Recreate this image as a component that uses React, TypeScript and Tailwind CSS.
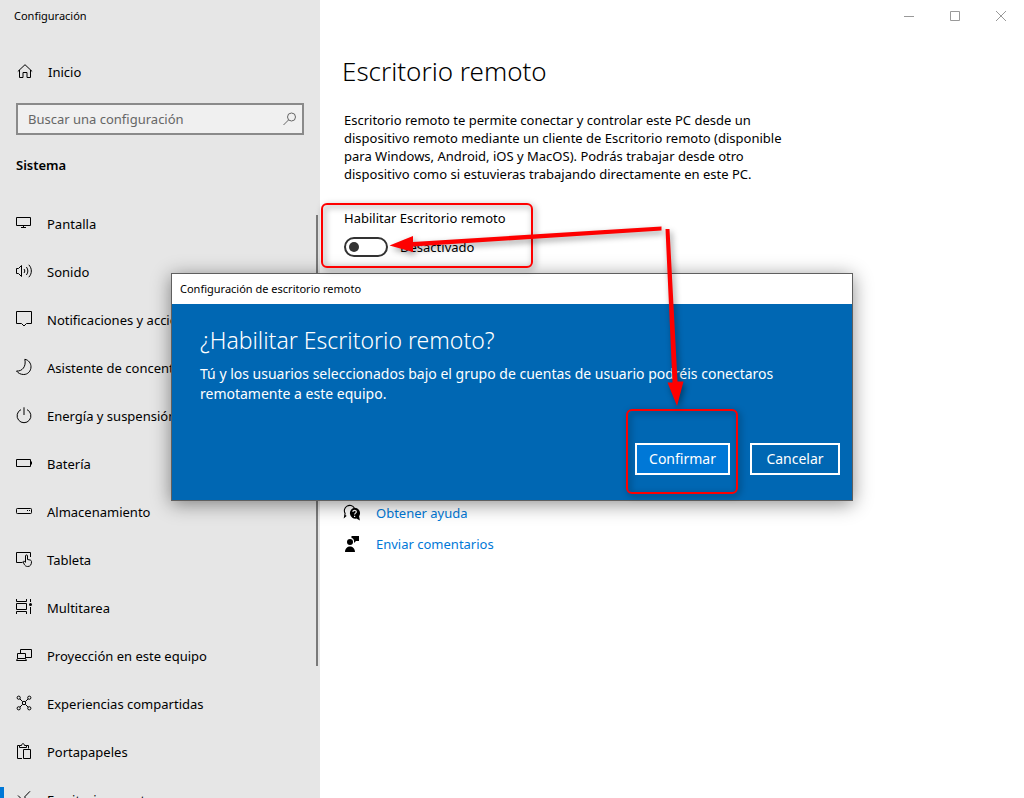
import { useState } from "react";
import type { ReactNode } from "react";

function Icon({ children }: { children: ReactNode }) {
  return (
    <svg
      className="size-4 shrink-0 overflow-visible"
      viewBox="0 0 16 16"
      fill="none"
      stroke="currentColor"
      strokeWidth="1"
      aria-hidden="true"
    >
      {children}
    </svg>
  );
}

const navItems: { label: string; icon: ReactNode; active?: boolean }[] = [
  {
    label: "Pantalla",
    icon: <path d="M.5 2.500h14v8H.5zM7.500 10.500v2M5 12.500h5" />,
  },
  {
    label: "Sonido",
    icon: (
      <>
        <path d="M.5 5.500h2l3-3v11l-3-3h-2z" />
        <path d="M8 6c1 1.200 1 2.800 0 4M10.300 4c2 2.400 2 5.600 0 8M12.800 1.800c3.400 3.600 3.400 8.800 0 12.400" />
      </>
    ),
  },
  {
    label: "Notificaciones y acciones",
    icon: <path d="M.5.5h15v12h-5L8 15l-2.500-2.500h-5z" />,
  },
  {
    label: "Asistente de concentración",
    icon: (
      <path d="M8.800.3c3.800.6 6.200 4 6.200 7.500 0 4.300-3.200 7.700-7.300 7.700-3 0-5.600-1.300-7.200-3.500 5.600.6 10-4.500 8.300-11.700z" />
    ),
  },
  {
    label: "Energía y suspensión",
    icon: <path d="M5 2.600a6.900 6.900 0 1 0 6 0M8 .3v7.700" />,
  },
  {
    label: "Batería",
    icon: <path d="M.5 4.500h14v7H.5zM15.500 6.500v3" />,
  },
  {
    label: "Almacenamiento",
    icon: (
      <>
        <rect x=".5" y="5.500" width="15" height="5" rx=".8" />
        <path d="M11 7.500h1M13 7.500h1" />
      </>
    ),
  },
  {
    label: "Tableta",
    icon: (
      <>
        <path d="M6.500 11.500h-6v-10h14v4.500" />
        <path d="M9.500 11V5c0-1.500 2-1.500 2 0v3.500l2.500.5c1 .2 1.500.8 1.500 1.700 0 2.900-1.200 4.800-3.800 4.800-1.800 0-2.900-1-3.500-2.300L7 10.800c.6-1 1.700-.8 2.500.8" />
      </>
    ),
  },
  {
    label: "Multitarea",
    icon: (
      <>
        <path d="M.5 0v2.500h10V0M.5 4.500h10v6H.5zM.5 15v-2.500h10V15M14.500 0v3M14.500 8v7" />
        <circle cx="14.500" cy="5.500" r="1.500" fill="currentColor" stroke="none" />
      </>
    ),
  },
  {
    label: "Proyección en este equipo",
    icon: (
      <path d="M4.500 6V2.500h11v8H10M1.500 11.500v-5h8v5M.5 13.500l1-2h8l1 2z" />
    ),
  },
  {
    label: "Experiencias compartidas",
    icon: (
      <>
        <circle cx="2.700" cy="2.700" r="1.600" />
        <circle cx="13.300" cy="2.700" r="1.600" />
        <circle cx="2.700" cy="13.300" r="1.600" />
        <circle cx="13.300" cy="13.300" r="1.600" />
        <circle cx="8" cy="8" r="1.700" />
        <path d="M4 4l2.700 2.700M12 4L9.300 6.700M4 12l2.700-2.700M12 12L9.300 9.300" />
      </>
    ),
  },
  {
    label: "Portapapeles",
    icon: (
      <path d="M6 15.500H1.500v-13h2M10.500 2.500h2v3M3.500 4.500v-2h2c0-2.400 3-2.400 3 0h2v2zM7.500 6.500h7v9h-7z" />
    ),
  },
  {
    label: "Escritorio remoto",
    active: true,
    icon: <path d="M14 .3L8.500 6l5.500 5.500M2 4.500L7.500 10 2 15.500" />,
  },
];

function Sidebar() {
  return (
    <aside className="relative flex w-80 shrink-0 flex-col bg-[#e6e6e6]">
      <p className="px-3.5 pt-2 text-[11px] leading-4">Configuración</p>
      <a href="#inicio" className="mt-6 flex h-12 items-center gap-4 pl-4">
        <Icon>
          <path d="M1.800 7.500L9 .7l7.200 6.800M3.500 6v7.500h3.500v-5h4v5h3.500V6" />
        </Icon>
        <span>Inicio</span>
      </a>
      <label className="mx-4 mt-[7px] flex h-8 items-center border-2 border-[#8a8a8a] bg-[#f0f0f0] pr-1 pl-2.5 text-[#666]">
        <input
          type="search"
          aria-label="Buscar una configuración"
          placeholder="Buscar una configuración"
          className="min-w-0 flex-1 bg-transparent outline-none placeholder:text-[#666]"
        />
        <Icon>
          <circle cx="9.500" cy="6" r="4" />
          <path d="M6.600 8.900L1.500 14" />
        </Icon>
      </label>
      <h2 className="mt-5 px-4 leading-5 font-semibold">Sistema</h2>
      <nav className="mt-[25px] min-h-0 flex-1 overflow-hidden">
        <ul>
          {navItems.map((item) => (
            <li key={item.label}>
              <a href="#sistema" className="relative flex h-12 items-center gap-[15px] pl-4">
                {item.active && <span className="absolute top-[11px] left-0 h-6 w-1 bg-[#0078d7]" />}
                <span className="pb-0.5">
                  <Icon>{item.icon}</Icon>
                </span>
                <span className="whitespace-nowrap">{item.label}</span>
              </a>
            </li>
          ))}
        </ul>
      </nav>
      <div className="absolute top-[215px] right-0.5 h-[451px] w-0.5 bg-[#7a7a7a]" />
    </aside>
  );
}

function WindowControls() {
  return (
    <div className="flex h-[31px] justify-end text-[#999]">
      <button aria-label="Minimizar" className="grid w-[46px] place-items-center">
        <svg className="size-2.5" viewBox="0 0 10 10" stroke="currentColor">
          <path d="M0 5.500h10" />
        </svg>
      </button>
      <button aria-label="Maximizar" className="grid w-[46px] place-items-center">
        <svg className="size-2.5" viewBox="0 0 10 10" fill="none" stroke="currentColor">
          <path d="M.5.5h9v9h-9z" />
        </svg>
      </button>
      <button aria-label="Cerrar" className="grid w-[46px] place-items-center">
        <svg className="size-2.5" viewBox="0 0 10 10" stroke="currentColor">
          <path d="M0 0l10 10M10 0L0 10" />
        </svg>
      </button>
    </div>
  );
}

function Content() {
  const [enabled, setEnabled] = useState(false);
  return (
    <main className="min-w-0 flex-1 bg-white">
      <WindowControls />
      <div className="px-6 pt-5">
        <h1 className="-ml-0.5 text-[26px] leading-10 font-light">Escritorio remoto</h1>
        <p className="mt-5 max-w-[460px] leading-[18px]">
          Escritorio remoto te permite conectar y controlar este PC desde un
          <br />
          dispositivo remoto mediante un cliente de Escritorio remoto (disponible
          <br />
          para Windows, Android, iOS y MacOS). Podrás trabajar desde otro
          <br />
          dispositivo como si estuvieras trabajando directamente en este PC.
        </p>
        <div className="relative mt-[25px]">
          <label htmlFor="remote" className="block leading-5">
            Habilitar Escritorio remoto
          </label>
          <div className="mt-[9px] flex h-5 items-center gap-3">
            <input
              id="remote"
              type="checkbox"
              checked={enabled}
              onChange={(e) => setEnabled(e.target.checked)}
              className="flex h-5 w-11 appearance-none items-center rounded-full border-2 border-[#333] px-[3px] before:size-2.5 before:rounded-full before:bg-[#333] checked:justify-end"
            />
            <span>{enabled ? "Activado" : "Desactivado"}</span>
          </div>
          <div className="pointer-events-none absolute -top-[5px] -left-[23px] z-20 h-[65px] w-[212px] rounded-md border-2 border-[#fe0000] drop-shadow-[2px_2px_3px_rgba(0,0,0,0.5)]" />
        </div>
        <ul className="mt-[240px] text-[#0078d7]">
          <li>
            <a href="#ayuda" className="flex h-[31px] items-center gap-4">
              <svg className="size-4 overflow-visible text-black" viewBox="0 0 16 16" aria-hidden="true">
                <path d="M2.200 10.500L.5 12l.6-3.600A5.200 5.200 0 1 1 10.300 3" fill="none" stroke="currentColor" strokeWidth="1.100" />
                <path d="M10.500 2.700a5.500 5.500 0 0 1 4.600 8.500l.8 4.300-3.500-1.900A5.500 5.500 0 1 1 10.500 2.700z" fill="currentColor" />
                <path d="M8.800 6.900c.1-2.200 3.600-2.100 3.500 0 0 1.200-1.700 1.300-1.700 2.700M10.600 10.700v1.200" fill="none" stroke="#fff" strokeWidth="1.200" />
              </svg>
              Obtener ayuda
            </a>
          </li>
          <li>
            <a href="#comentarios" className="flex h-[31px] items-center gap-4">
              <svg className="size-4 text-black" viewBox="0 0 16 16" fill="currentColor" aria-hidden="true">
                <circle cx="6" cy="6" r="3" />
                <path d="M1 16c0-7.500 10-7.500 10 0zM7.500 0H15v5h-3l-2 2V4.500C9.500 3 8.800 2.200 7.500 2z" />
              </svg>
              Enviar comentarios
            </a>
          </li>
        </ul>
      </div>
    </main>
  );
}

function RemoteDialog() {
  return (
    <div className="pointer-events-none absolute inset-x-0 top-[273px] z-10 flex justify-center">
      <section
        role="dialog"
        aria-labelledby="dialog-title"
        className="pointer-events-auto w-[682px] border border-[#5f5f5f] bg-[#0067b3] text-white shadow-[0_3px_18px_rgba(0,0,0,0.45)]"
      >
        <header className="flex h-[30px] items-center bg-white px-2 text-[11px] text-black">
          Configuración de escritorio remoto
        </header>
        <div className="pt-5 pr-3 pb-[25px] pl-7">
          <h2 id="dialog-title" className="text-[23px] leading-8 font-light">
            ¿Habilitar Escritorio remoto?
          </h2>
          <p className="mt-2 text-[14px] leading-5">
            Tú y los usuarios seleccionados bajo el grupo de cuentas de usuario podréis conectaros
            <br />
            remotamente a este equipo.
          </p>
          <div className="mt-[39px] flex justify-end gap-5 text-[14px]">
            <div className="relative">
              <button className="h-8 w-[95px] border-2 border-white bg-[#0078d7]">Confirmar</button>
              <div className="pointer-events-none absolute -top-[34px] -right-2 -bottom-[19px] -left-[9px] rounded-md border-2 border-[#fe0000] drop-shadow-[2px_2px_3px_rgba(0,0,0,0.5)]" />
            </div>
            <button className="h-8 w-[90px] border-2 border-white">Cancelar</button>
          </div>
        </div>
      </section>
    </div>
  );
}

function Arrows() {
  return (
    <svg
      className="pointer-events-none absolute top-[220px] left-[380px] z-30 h-[200px] w-[320px] drop-shadow-[2px_3px_3px_rgba(0,0,0,0.4)]"
      viewBox="380 220 320 200"
      fill="#fe0000"
      aria-hidden="true"
    >
      <path d="M389.500 245.500L413 236v6L661.500 226.500v4L413 246.500v5.500z" />
      <path d="M665.500 229h4L677.500 381.500h6L677 406l-9.500-23.500h5z" />
    </svg>
  );
}

export default function App() {
  return (
    <div className="relative flex h-screen overflow-hidden font-['Noto_Sans','Open_Sans',sans-serif] text-[13px] leading-5 text-black">
      <Sidebar />
      <Content />
      <RemoteDialog />
      <Arrows />
    </div>
  );
}
